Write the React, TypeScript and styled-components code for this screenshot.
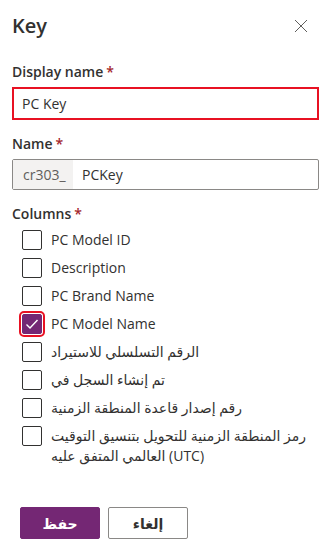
import React from 'react';
import styled, { createGlobalStyle } from 'styled-components';

const GlobalStyle = createGlobalStyle`
  html, body {
    margin: 0;
    padding: 0;
    background: #ffffff;
  }
  body {
    font-family: 'Open Sans', 'DejaVu Sans', sans-serif;
    color: #323130;
  }
  * {
    box-sizing: border-box;
  }
`;

const Panel = styled.div`
  width: 331px;
  height: 559px;
  padding: 12px 12px 0 12px;
  display: flex;
  flex-direction: column;
`;

const Header = styled.div`
  display: flex;
  align-items: center;
  justify-content: space-between;
  height: 28px;
  margin-top: 0;
`;

const Title = styled.h1`
  margin: 0;
  font-size: 20px;
  font-weight: 600;
  line-height: 28px;
  color: #323130;
`;

const CloseButton = styled.button`
  border: none;
  background: transparent;
  padding: 0;
  width: 16px;
  height: 16px;
  margin-right: 10px;
  display: flex;
  align-items: center;
  justify-content: center;
  cursor: pointer;
`;

const Field = styled.div`
  display: flex;
  flex-direction: column;
  margin-top: ${(p: { $top: number }) => p.$top}px;
`;

const Label = styled.label`
  font-size: 14px;
  font-weight: 600;
  line-height: 20px;
  color: #323130;
  margin-bottom: 5px;
`;

const Required = styled.span`
  color: #a4262c;
  margin-left: 3px;
`;

const HighlightInput = styled.div`
  height: 33px;
  border: 2px solid #e81123;
  display: flex;
  align-items: center;
  padding-left: 8px;
  font-size: 14px;
  color: #323130;
`;

const PrefixInput = styled.div`
  height: 31px;
  width: 307px;
  border: 1px solid #8a8886;
  border-radius: 2px;
  display: flex;
  align-items: stretch;
  font-size: 14px;
`;

const Prefix = styled.span`
  background: #f3f2f1;
  color: #605e5c;
  display: flex;
  align-items: center;
  padding: 0 10px;
  width: 60px;
`;

const Value = styled.span`
  display: flex;
  align-items: center;
  padding-left: 9px;
  color: #323130;
`;

const CheckList = styled.div`
  display: flex;
  flex-direction: column;
  gap: 8px;
  padding-left: 10px;
  margin-top: 1px;
`;

const Row = styled.label`
  display: flex;
  align-items: flex-start;
  gap: 9px;
  font-size: 14px;
  line-height: 20px;
  color: #323130;
`;

const Box = styled.span<{ $checked?: boolean; $marked?: boolean }>`
  flex: none;
  width: 20px;
  height: 20px;
  border: 1px solid ${(p) => (p.$checked ? '#742774' : '#323130')};
  background: ${(p) => (p.$checked ? '#742774' : '#ffffff')};
  border-radius: 2px;
  display: flex;
  align-items: center;
  justify-content: center;
  outline: ${(p) => (p.$marked ? '2px solid #e81123' : 'none')};
  outline-offset: 1px;
`;

const RowText = styled.span`
  max-width: 255px;
`;

const Footer = styled.div`
  display: flex;
  gap: 8px;
  padding-left: 8px;
  margin-top: 41px;
`;

const Button = styled.button<{ $primary?: boolean }>`
  width: 80px;
  height: 32px;
  border-radius: 2px;
  font-family: 'Open Sans', 'DejaVu Sans', sans-serif;
  font-size: 14px;
  font-weight: 600;
  border: 1px solid ${(p) => (p.$primary ? '#742774' : '#8a8886')};
  background: ${(p) => (p.$primary ? '#742774' : '#ffffff')};
  color: ${(p) => (p.$primary ? '#ffffff' : '#323130')};
  cursor: pointer;
`;

const columns = [
  { name: 'PC Model ID' },
  { name: 'Description' },
  { name: 'PC Brand Name' },
  { name: 'PC Model Name', checked: true },
  { name: 'الرقم التسلسلي للاستيراد' },
  { name: 'تم إنشاء السجل في' },
  { name: 'رقم إصدار قاعدة المنطقة الزمنية' },
  { name: 'رمز المنطقة الزمنية للتحويل بتنسيق التوقيت العالمي المتفق عليه (UTC)' },
];

export default function App() {
  return (
    <>
      <GlobalStyle />
      <Panel>
        <Header>
          <Title>Key</Title>
          <CloseButton aria-label="Close">
            <svg width="14" height="14" viewBox="0 0 14 14">
              <path d="M1 1 L13 13 M13 1 L1 13" stroke="#605e5c" strokeWidth="1" fill="none" />
            </svg>
          </CloseButton>
        </Header>

        <Field $top={22}>
          <Label>
            Display name<Required>*</Required>
          </Label>
          <HighlightInput>PC Key</HighlightInput>
        </Field>

        <Field $top={14}>
          <Label>
            Name<Required>*</Required>
          </Label>
          <PrefixInput>
            <Prefix>cr303_</Prefix>
            <Value>PCKey</Value>
          </PrefixInput>
        </Field>

        <Field $top={14}>
          <Label>
            Columns<Required>*</Required>
          </Label>
          <CheckList>
            {columns.map((c) => (
              <Row key={c.name}>
                <Box $checked={c.checked} $marked={c.checked}>
                  {c.checked && (
                    <svg width="14" height="12" viewBox="0 0 14 12">
                      <path d="M1.5 6.5 L5 10 L12.5 2" stroke="#ffffff" strokeWidth="1.4" fill="none" />
                    </svg>
                  )}
                </Box>
                <RowText>{c.name}</RowText>
              </Row>
            ))}
          </CheckList>
        </Field>

        <Footer>
          <Button $primary>حفظ</Button>
          <Button>إلغاء</Button>
        </Footer>
      </Panel>
    </>
  );
}
